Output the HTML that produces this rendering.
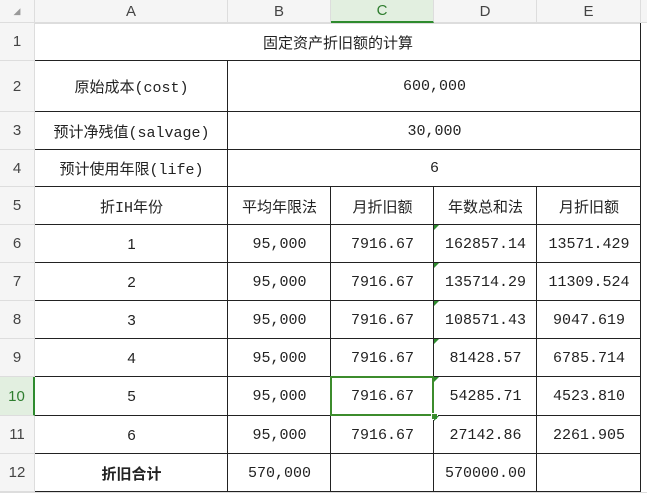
<!DOCTYPE html>
<html><head><meta charset="utf-8"><style>
body{margin:0;width:647px;height:496px;overflow:hidden;background:#fff;font-family:"Liberation Mono","Noto Sans CJK SC",monospace;position:relative}
.h{position:absolute;background:#f5f5f5;color:#444;font-family:"Liberation Sans",sans-serif;font-size:15px;display:flex;align-items:center;justify-content:center;box-sizing:border-box}
.c{position:absolute;display:flex;align-items:center;justify-content:center;font-size:15px;color:#222;box-sizing:border-box}
.l{position:absolute;background:#222}
.g{position:absolute;background:#ddd}
</style></head><body>
<div class="h" style="left:0;top:0;width:35px;height:23px;border-right:1px solid #ddd;border-bottom:1px solid #ddd;font-size:9px;color:#999">◢</div>
<div class="h" style="left:35px;top:0;width:193px;height:23px;border-right:1px solid #ddd;border-bottom:1px solid #ddd">A</div>
<div class="h" style="left:228px;top:0;width:103px;height:23px;border-right:1px solid #ddd;border-bottom:1px solid #ddd">B</div>
<div class="h" style="left:331px;top:0;width:103px;height:23px;border-right:1px solid #ddd;border-bottom:2px solid #2e8b2e;background:#e2efe0;color:#2e7d2e">C</div>
<div class="h" style="left:434px;top:0;width:103px;height:23px;border-right:1px solid #ddd;border-bottom:1px solid #ddd">D</div>
<div class="h" style="left:537px;top:0;width:104px;height:23px;border-right:1px solid #ddd;border-bottom:1px solid #ddd">E</div>
<div class="h" style="left:641px;top:0;width:6px;height:23px;border-bottom:1px solid #ddd"></div>
<div id="rows"></div>
<script>
var tops=[23,61,112,150,187,225,263,301,339,377,416,454,492];
var r=document.getElementById('rows'),h='';
for(var i=0;i<12;i++){var t=tops[i],hh=tops[i+1]-t;
h+='<div class="h" style="left:0;top:'+t+'px;width:35px;height:'+hh+'px;border-right:'+(i==9?'2px solid #2e8b2e':'1px solid #ddd')+';border-bottom:1px solid #ddd;'+(i==9?'background:#e2efe0;color:#2e7d2e':'')+'">'+(i+1)+'</div>';}
var cols=[35,228,331,434,537,641];
var data=[
[['固定资产折旧额的计算',0,5]],
[['原始成本(cost)',0,1],['600,000',1,5]],
[['预计净残值(salvage)',0,1],['30,000',1,5]],
[['预计使用年限(life)',0,1],['6',1,5]],
[['折IH年份',0,1],['平均年限法',1,2],['月折旧额',2,3],['年数总和法',3,4],['月折旧额',4,5]]];
var d=['162857.14','135714.29','108571.43','81428.57','54285.71','27142.86'];
var e=['13571.429','11309.524','9047.619','6785.714','4523.810','2261.905'];
for(var k=0;k<6;k++)data.push([[String(k+1),0,1],['95,000',1,2],['7916.67',2,3],[d[k],3,4],[e[k],4,5]]);
data.push([['<b>折旧合计</b>',0,1],['570,000',1,2],['',2,3],['570000.00',3,4],['',4,5]]);
for(var i=0;i<12;i++){var t=tops[i],hh=tops[i+1]-t;
data[i].forEach(function(c){var x=cols[c[1]],w=cols[c[2]]-x;
h+='<div class="c" style="left:'+x+'px;top:'+t+'px;width:'+w+'px;height:'+hh+'px;'+(c[1]==0&&i>=5?'font-family:\'Liberation Sans\',\'Noto Sans CJK SC\',sans-serif;':'')+'">'+c[0]+'</div>';});}
// horizontal lines
for(var i=1;i<13;i++){h+='<div class="l" style="left:35px;top:'+(tops[i]-1)+'px;width:606px;height:1px"></div>';}
h+='<div class="g" style="left:35px;top:'+(23)+'px;width:606px;height:1px"></div>';
// vertical lines
h+='<div class="l" style="left:640px;top:23px;width:1px;height:469px"></div>';
h+='<div class="l" style="left:227px;top:61px;width:1px;height:431px"></div>';
[330,433,536].forEach(function(x){h+='<div class="l" style="left:'+x+'px;top:187px;width:1px;height:305px"></div>';});
h+='<div class="g" style="left:0;top:492px;width:647px;height:1px"></div>';
// selection
h+='<div style="position:absolute;left:330px;top:376px;width:104px;height:40px;border:2px solid #3c8c2c;box-sizing:border-box"></div>';
h+='<div style="position:absolute;left:431px;top:413px;width:5px;height:5px;background:#3c8c2c;border:1px solid #fff"></div>';
for(var i=5;i<11;i++)h+='<div style="position:absolute;left:434px;top:'+tops[i]+'px;width:0;height:0;border-top:5px solid #2e8b2e;border-right:5px solid transparent"></div>';
r.innerHTML=h;
</script>
</body></html>
